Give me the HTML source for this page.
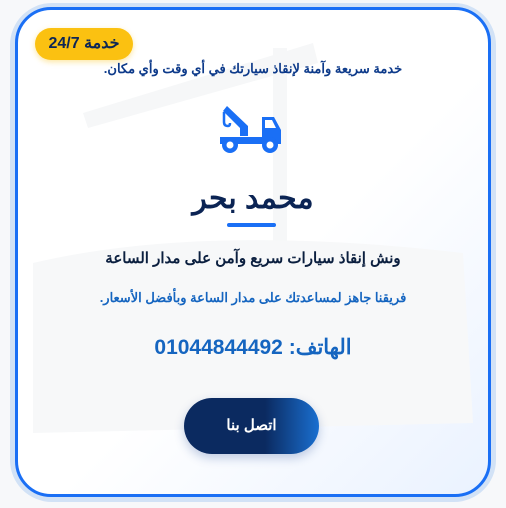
<!DOCTYPE html>
<html><head><meta charset="utf-8"><style>
body{margin:0;width:506px;height:508px;background:#f7f8fa;position:relative;overflow:hidden;font-family:"Liberation Sans","Noto Sans CJK SC",sans-serif}
.outer{position:absolute;left:10px;top:3px;width:486px;height:499px;border-radius:42px;background:#d2e2f6}
.card{position:absolute;left:15px;top:7px;width:470px;height:484px;border:3px solid #1a6ff5;border-radius:36px;background:linear-gradient(135deg,#fff 55%,#eaf2ff 100%);overflow:hidden}
.badge{position:absolute;left:35px;top:28px;width:98px;height:32px;border-radius:16px;background:#fbc111;color:#0d2656;font-weight:bold;font-size:16px;line-height:32px;text-align:center;direction:rtl;box-shadow:0 2px 6px rgba(251,193,17,.4)}
.t{position:absolute;left:0;width:506px;text-align:center;direction:rtl;font-weight:bold}
</style></head><body>
<div class="outer"></div>
<div class="card">
<svg width="470" height="484" style="position:absolute;left:-15px;top:-7px" fill="#f6f7f8">
<path d="M80 110 L310 40 L315 60 L85 125Z"/><rect x="270" y="45" width="14" height="330"/>
<path d="M30 260 Q200 220 460 250 L470 420 L30 430Z" fill="#f7f8f9"/>
</svg>
</div>
<div class="badge">خدمة 24/7</div>
<div class="t" style="top:61px;font-size:13px;color:#0d3a8a">خدمة سريعة وآمنة لإنقاذ سيارتك في أي وقت وأي مكان.</div>
<svg style="position:absolute;left:220px;top:106px" width="63" height="47" viewBox="0 0 63 47" fill="#1a6ff5">
<path d="M7 0 L28 20 L28 30 L20 30 L20 22 L3 5Z"/>
<path d="M4 6 L4 16 Q4 20 8 20 Q10 20 10 17" stroke="#1a6ff5" stroke-width="2.5" fill="none"/>
<path d="M0 31 L42 31 L42 11 L54 11 L61 24 L61 38 L0 38Z"/>
<path d="M45 14 L52 14 L56 22 L45 22Z" fill="#fff"/>
<circle cx="10" cy="39" r="8"/><circle cx="50" cy="39" r="8"/>
<circle cx="10" cy="39" r="3.5" fill="#fff"/><circle cx="50" cy="39" r="3.5" fill="#fff"/>
</svg>
<div class="t" style="top:181px;font-size:30px;color:#0b2454">محمد بحر</div>
<div style="position:absolute;left:227px;top:223px;width:49px;height:4px;border-radius:2px;background:#1a6ff5"></div>
<div class="t" style="top:249px;font-size:15px;color:#0b1f3f">ونش إنقاذ سيارات سريع وآمن على مدار الساعة</div>
<div class="t" style="top:290px;font-size:13px;color:#1565c0">فريقنا جاهز لمساعدتك على مدار الساعة وبأفضل الأسعار.</div>
<div class="t" style="top:335px;font-size:21px;color:#1565c0">الهاتف: 01044844492</div>
<div style="position:absolute;left:184px;top:398px;width:135px;height:56px;border-radius:28px;background:linear-gradient(90deg,#0b2a60 60%,#1a6fd0);color:#fff;font-weight:bold;font-size:15px;line-height:56px;text-align:center;direction:rtl;box-shadow:0 4px 10px rgba(20,60,140,.25)">اتصل بنا</div>
</body></html>
